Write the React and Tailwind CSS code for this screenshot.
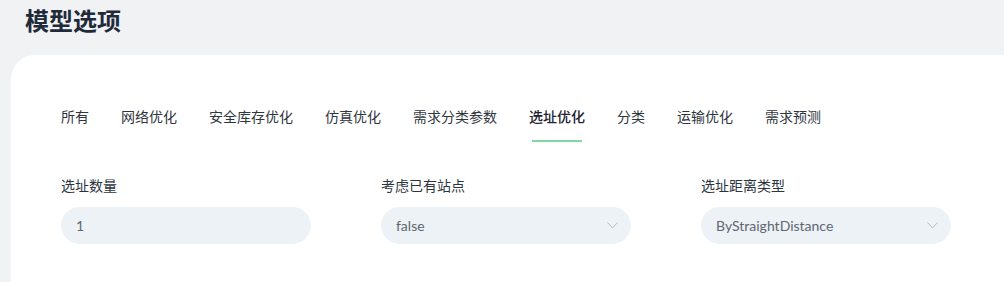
import { useState } from 'react';

const tabs = ['所有', '网络优化', '安全库存优化', '仿真优化', '需求分类参数', '选址优化', '分类', '运输优化', '需求预测'];

function Chevron() {
  return (
    <svg width="11" height="7" viewBox="0 0 11 7" fill="none" className="shrink-0">
      <path d="M0.5 0.5 L5.5 6 L10.5 0.5" stroke="#b8bcc3" strokeWidth="1" />
    </svg>
  );
}

function Field({ label, value, select }) {
  return (
    <div className="flex flex-col">
      <label className="text-[14px] leading-[20px] text-[#2c3440] mb-[11px]">{label}</label>
      <div className="flex h-[37px] w-[250px] items-center justify-between rounded-full bg-[#edf2f7] pl-[15px] pr-[13px]">
        <span className="text-[14px] text-[#5f6670]">{value}</span>
        {select && <Chevron />}
      </div>
    </div>
  );
}

export default function App() {
  const [active, setActive] = useState('选址优化');

  return (
    <div
      className="min-h-[282px] w-full bg-[#f1f2f4] pt-[6px]"
      style={{ fontFamily: 'Lato, "Noto Sans CJK SC", sans-serif' }}
    >
      <h1 className="pl-[25px] text-[24px] leading-[30px] font-bold text-[#1f2b3a]">模型选项</h1>

      <div className="ml-[11px] mt-[19px] min-h-[227px] rounded-tl-[24px] bg-white pl-[50px] pt-[52px]">
        {/* tabs */}
        <div className="flex gap-[32px]">
          {tabs.map((t) => (
            <button
              key={t}
              onClick={() => setActive(t)}
              className={`relative pb-[12px] text-[14px] leading-[20px] ${
                active === t ? 'font-medium text-[#1d2430]' : 'text-[#2f3640]'
              }`}
            >
              {t}
              {active === t && (
                <span className="absolute bottom-[-3px] left-[3px] h-[2px] w-[50px] bg-[#82d6a2]" />
              )}
            </button>
          ))}
        </div>

        {/* fields */}
        <div className="mt-[37px] grid grid-cols-[250px_250px_250px] gap-x-[70px]">
          <Field label="选址数量" value="1" />
          <Field label="考虑已有站点" value="false" select />
          <Field label="选址距离类型" value="ByStraightDistance" select />
        </div>
      </div>
    </div>
  );
}
